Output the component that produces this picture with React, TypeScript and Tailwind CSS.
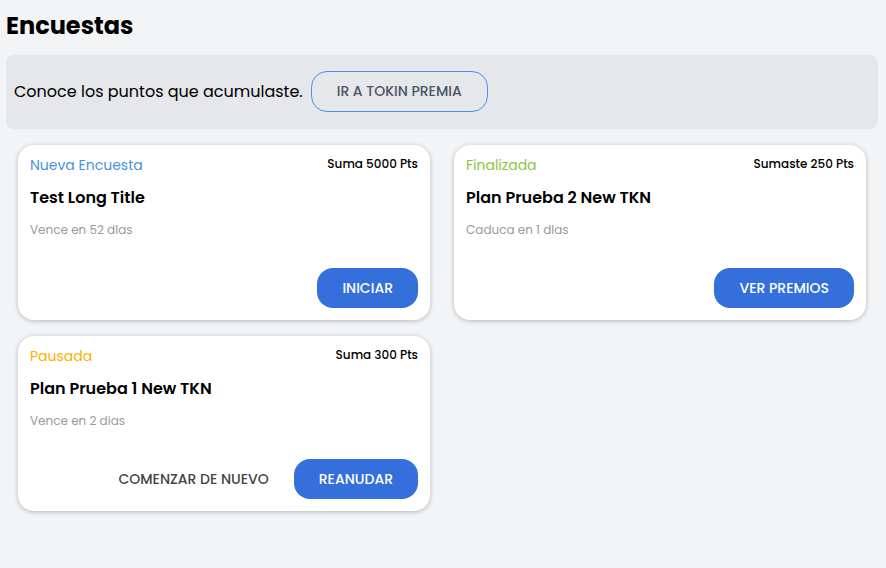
import React from 'react'

interface Survey {
    status: string;
    statusColor: string;
    points: string;
    title: string;
    expires: string;
    action: string;
    secondary?: string;
}

const surveys: Survey[] = [
    { status: 'Nueva Encuesta', statusColor: 'text-[#4a90e2]', points: 'Suma 5000 Pts', title: 'Test Long Title', expires: 'Vence en 52 dlas', action: 'INICIAR' },
    { status: 'Finalizada', statusColor: 'text-[#8dc63f]', points: 'Sumaste 250 Pts', title: 'Plan Prueba 2 New TKN', expires: 'Caduca en 1 dlas', action: 'VER PREMIOS' },
    { status: 'Pausada', statusColor: 'text-[#ffb000]', points: 'Suma 300 Pts', title: 'Plan Prueba 1 New TKN', expires: 'Vence en 2 dias', action: 'REANUDAR', secondary: 'COMENZAR DE NUEVO' },
]

const SurveyCard = ({ s }: { s: Survey }) => (
    <div className="flex flex-col h-[175px] bg-white rounded-2xl shadow-[0_1px_5px_rgba(0,0,0,0.25)] px-3 pt-[10px] pb-3">
        <div className="flex items-start justify-between">
            <span className={`text-sm leading-5 ${s.statusColor}`}>{s.status}</span>
            <span className="text-xs font-medium leading-[18px] text-black">{s.points}</span>
        </div>
        <h3 className="mt-[11px] text-base font-semibold leading-6 text-black">{s.title}</h3>
        <p className="mt-[10px] text-xs leading-5 text-[#9a9a9a]">{s.expires}</p>
        <div className="flex items-center justify-end gap-[25px] mt-auto">
            {s.secondary && (
                <button className="text-sm font-medium text-[#444]">{s.secondary}</button>
            )}
            <button className="h-10 px-[25px] rounded-2xl bg-[#346fdc] text-sm font-medium text-white">
                {s.action}
            </button>
        </div>
    </div>
)

const App = () => {
    return (
        <div className="min-h-[568px] bg-gray-100 pl-[6px] pr-[8px] pt-[10px] font-['Poppins','Open_Sans',sans-serif]">
            <h1 className="text-2xl font-bold leading-8 text-black">Encuestas</h1>

            <div className="flex items-center gap-[8px] mt-[13px] h-[74px] px-2 rounded-lg bg-gray-200">
                <p className="text-base text-black">Conoce los puntos que acumulaste.</p>
                <button className="h-[41px] w-[177px] -mt-[2px] rounded-2xl border border-[#4a90f0] text-sm font-medium text-gray-600">
                    IR A TOKIN PREMIA
                </button>
            </div>

            <div className="grid grid-cols-2 gap-x-6 gap-y-4 p-3 pt-4">
                {surveys.map((s) => (
                    <SurveyCard key={s.title} s={s} />
                ))}
            </div>
        </div>
    )
}

export default App
